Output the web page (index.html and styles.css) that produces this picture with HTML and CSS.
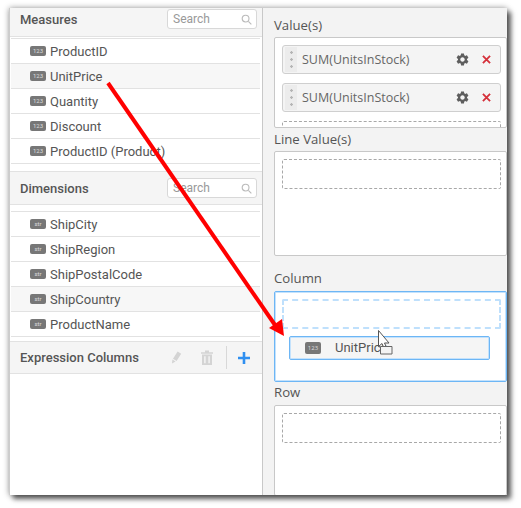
FILE: index.html
```html
<!DOCTYPE html>
<html>

<head>
  <title>Chart Data Panel</title>
  <link rel="stylesheet" href="styles.css">
</head>

<body>
  <div class="window">
    <div class="left">
      <div class="head head-first">
        <span class="head-title">Measures</span>
        <div class="search"><span>Search</span>
          <svg class="search-icon" width="11" height="11" viewBox="0 0 12 12"><circle cx="5" cy="5" r="3.7"/><path d="M8 8l3.3 3.3"/></svg>
        </div>
      </div>
      <ul class="list">
        <li><span class="badge">123</span>ProductID</li>
        <li class="shaded"><span class="badge">123</span>UnitPrice</li>
        <li><span class="badge">123</span>Quantity</li>
        <li><span class="badge">123</span>Discount</li>
        <li><span class="badge">123</span>ProductID (Product)</li>
      </ul>
      <div class="head">
        <span class="head-title">Dimensions</span>
        <div class="search"><span>Search</span>
          <svg class="search-icon" width="11" height="11" viewBox="0 0 12 12"><circle cx="5" cy="5" r="3.7"/><path d="M8 8l3.3 3.3"/></svg>
        </div>
      </div>
      <ul class="list list-dims">
        <li><span class="badge">str</span>ShipCity</li>
        <li><span class="badge">str</span>ShipRegion</li>
        <li><span class="badge">str</span>ShipPostalCode</li>
        <li class="shaded"><span class="badge">str</span>ShipCountry</li>
        <li><span class="badge">str</span>ProductName</li>
      </ul>
      <div class="head head-expr">
        <span class="head-title">Expression Columns</span>
        <div class="tools">
          <svg width="14" height="15" viewBox="0 0 14 15"><path class="tool-fill" d="M8.6 1.5l3.6 2.2-4.6 7.2-3.6-2.2zM3.4 9.6l3.2 2-3.6 1.8z"/></svg>
          <svg class="trash" width="14" height="15" viewBox="0 0 14 15"><path class="tool-fill" d="M1 2.2h12v1.5H1zM5 .6h4v1.6H5zM2 4.6h10V15H2zM4.2 6.2v7h1.4v-7zM8.4 6.2v7h1.4v-7z" fill-rule="evenodd"/></svg>
          <span class="sep"></span>
          <svg width="12" height="12" viewBox="0 0 12 12"><path class="plus" d="M6 0v12M0 6h12"/></svg>
        </div>
      </div>
    </div>

    <div class="right">
      <div class="label">Value(s)</div>
      <div class="box box-values">
        <div class="item">
          <span class="grip"></span>
          <span class="item-name">SUM(UnitsInStock)</span>
          <svg class="gear" width="15" height="15" viewBox="0 0 24 24"><path d="M19.14 12.94c.04-.3.06-.61.06-.94 0-.32-.02-.64-.07-.94l2.03-1.58c.18-.14.23-.41.12-.61l-1.92-3.32c-.12-.22-.37-.29-.59-.22l-2.39.96c-.5-.38-1.03-.7-1.62-.94l-.36-2.54c-.04-.24-.24-.41-.48-.41h-3.84c-.24 0-.43.17-.47.41l-.36 2.54c-.59.24-1.13.57-1.62.94l-2.39-.96c-.22-.08-.47 0-.59.22L2.74 8.87c-.12.21-.08.47.12.61l2.03 1.58c-.05.3-.09.63-.09.94s.02.64.07.94l-2.03 1.58c-.18.14-.23.41-.12.61l1.92 3.32c.12.22.37.29.59.22l2.39-.96c.5.38 1.03.7 1.62.94l.36 2.54c.05.24.24.41.48.41h3.84c.24 0 .44-.17.47-.41l.36-2.54c.59-.24 1.13-.56 1.62-.94l2.39.96c.22.08.47 0 .59-.22l1.92-3.32c.12-.22.07-.47-.12-.61l-2.01-1.58zM12 15.6c-1.98 0-3.6-1.62-3.6-3.6s1.62-3.6 3.6-3.6 3.6 1.62 3.6 3.6-1.62 3.6-3.6 3.6z"/></svg>
          <svg class="remove" width="9" height="9" viewBox="0 0 10 10"><path d="M1 1l8 8M9 1l-8 8"/></svg>
        </div>
        <div class="item">
          <span class="grip"></span>
          <span class="item-name">SUM(UnitsInStock)</span>
          <svg class="gear" width="15" height="15" viewBox="0 0 24 24"><path d="M19.14 12.94c.04-.3.06-.61.06-.94 0-.32-.02-.64-.07-.94l2.03-1.58c.18-.14.23-.41.12-.61l-1.92-3.32c-.12-.22-.37-.29-.59-.22l-2.39.96c-.5-.38-1.03-.7-1.62-.94l-.36-2.54c-.04-.24-.24-.41-.48-.41h-3.84c-.24 0-.43.17-.47.41l-.36 2.54c-.59.24-1.13.57-1.62.94l-2.39-.96c-.22-.08-.47 0-.59.22L2.74 8.87c-.12.21-.08.47.12.61l2.03 1.58c-.05.3-.09.63-.09.94s.02.64.07.94l-2.03 1.58c-.18.14-.23.41-.12.61l1.92 3.32c.12.22.37.29.59.22l2.39-.96c.5.38 1.03.7 1.62.94l.36 2.54c.05.24.24.41.48.41h3.84c.24 0 .44-.17.47-.41l.36-2.54c.59-.24 1.13-.56 1.62-.94l2.39.96c.22.08.47 0 .59-.22l1.92-3.32c.12-.22.07-.47-.12-.61l-2.01-1.58zM12 15.6c-1.98 0-3.6-1.62-3.6-3.6s1.62-3.6 3.6-3.6 3.6 1.62 3.6 3.6-1.62 3.6-3.6 3.6z"/></svg>
          <svg class="remove" width="9" height="9" viewBox="0 0 10 10"><path d="M1 1l8 8M9 1l-8 8"/></svg>
        </div>
        <div class="drop"></div>
      </div>

      <div class="label label-line">Line Value(s)</div>
      <div class="box box-line">
        <div class="drop"></div>
      </div>

      <div class="label label-column">Column</div>
      <div class="box box-column">
        <div class="drop"></div>
        <div class="drag-item"><span class="badge">123</span><span class="drag-name">UnitPrice</span></div>
      </div>

      <div class="label label-row">Row</div>
      <div class="box box-row">
        <div class="drop"></div>
      </div>
    </div>
  </div>

  <!-- annotation and mouse pointer on top of the screenshot -->
  <svg class="overlay" width="521" height="508" viewBox="0 0 521 508">
    <path d="M108 83L275 325" stroke="#f00" stroke-width="4" fill="none"/>
    <path d="M284 336L269 328L282 319z" fill="#f00"/>
    <path d="M378.500 330.500v16l3.500-3 2.500 6 2.500-1-2.500-5.500h4.500z" fill="#fff" stroke="#555" stroke-width="1"/>
    <path d="M380.500 346.500h11.500v7.500h-11.500z" fill="#f4f4f4" stroke="#666" stroke-width="1"/>
  </svg>
</body>

</html>
```

FILE: styles.css
```css
body {
  height: 508px;
  box-sizing: border-box;
  margin: 0;
  padding: 8px 0 0 9px;
  background: #fff;
  font-family: "Roboto", sans-serif;
  color: #555;
  overflow: hidden;
}

.window {
  display: flex;
  width: 498px;
  height: 487px;
  background: #fff;
  box-shadow: 4px 4px 5px rgba(0, 0, 0, .6), 0 0 6px rgba(0, 0, 0, .4);
}

.overlay {
  position: absolute;
  top: 0;
  left: 0;
}

/* left panel */
.left {
  width: 254px;
  box-sizing: border-box;
  border-left: 1px solid #ccc;
  border-right: 1px solid #c8c8c8;
}

.head {
  display: flex;
  align-items: center;
  justify-content: space-between;
  height: 34px;
  box-sizing: border-box;
  padding: 0 5px 0 10px;
  background: #f5f5f5;
  border-top: 1px solid #e2e2e2;
  border-bottom: 1px solid #e2e2e2;
}

.head-first {
  height: 29px;
  padding-bottom: 6px;
  border-top: none;
}

.head-expr {
  height: 33px;
}

.head-title {
  font-size: 13px;
  font-weight: 500;
  color: #555;
}

.search {
  display: flex;
  align-items: center;
  justify-content: space-between;
  width: 90px;
  height: 20px;
  box-sizing: border-box;
  padding: 0 4px 0 5px;
  background: #fff;
  border: 1px solid #d8d8d8;
  border-radius: 3px;
  font-size: 12px;
  color: #999;
}

.search-icon {
  fill: none;
  stroke: #bbb;
  stroke-width: 1.2;
}

.list {
  list-style: none;
  margin: 1px 2px 7px 1px;
  padding: 0;
  border-top: 1px solid #e2e2e2;
}

.list-dims {
  margin-top: 6px;
  margin-bottom: 4px;
}

.list li {
  display: flex;
  align-items: center;
  height: 24px;
  padding-left: 19px;
  font-size: 13px;
  color: #555;
  background: #fff;
  border-bottom: 1px solid #e2e2e2;
}

.list li.shaded {
  background: #f7f7f7;
}

.badge {
  width: 16px;
  height: 10px;
  margin-right: 4px;
  border-radius: 2px;
  background: #777;
  color: #ddd;
  font-size: 6px;
  line-height: 10px;
  text-align: center;
}

.tools {
  display: flex;
  align-items: center;
  padding-right: 7px;
}

.trash {
  margin-left: 17px;
}

.tool-fill {
  fill: #d4d4d4;
}

.sep {
  width: 1px;
  height: 23px;
  margin: 0 11px 0 12px;
  background: #d8d8d8;
}

.plus {
  fill: none;
  stroke: #2f8ff0;
  stroke-width: 2.6;
}

/* right panel */
.right {
  width: 244px;
  box-sizing: border-box;
  padding-left: 11px;
  background: #f3f3f3;
  font-family: "Open Sans", sans-serif;
  overflow: hidden;
}

.label {
  height: 18px;
  margin-top: 8px;
  font-size: 13.200px;
  line-height: 18px;
  color: #555;
}

.label-line {
  margin-top: 2px;
}

.label-column {
  margin-top: 13px;
}

.label-row {
  margin-top: 1px;
}

.box {
  position: relative;
  box-sizing: border-box;
  margin-top: 3px;
  padding: 7px 5px 0 7px;
  background: #fff;
  border: 1px solid #c8c8c8;
  border-radius: 2px;
  overflow: hidden;
}

.box-values {
  height: 91px;
}

.box-line {
  height: 105px;
}

.box-column {
  height: 91px;
  margin-top: 4px;
  border-color: #6db6f5;
  box-shadow: inset 0 0 0 1px #c4e2fc;
}

.box-row {
  height: 91px;
  margin-top: 4px;
}

.drop {
  height: 30px;
  box-sizing: border-box;
  border: 1px dashed #a8a8a8;
  border-radius: 2px;
}

.box-column .drop {
  border: 2px dashed #bfe0fc;
}

.item {
  display: flex;
  align-items: center;
  height: 29px;
  box-sizing: border-box;
  margin-bottom: 9px;
  background: #f4f4f4;
  border: 1px solid #cfcfcf;
  border-radius: 3px;
}

.grip {
  width: 12px;
  height: 25px;
  margin-left: 2px;
  background-color: #ececec;
  background-image: radial-gradient(circle, #b5b5b5 1px, transparent 1.5px);
  background-size: 3px 7px;
  background-repeat: repeat-y;
  background-position: center;
}

.item-name {
  flex: 1;
  margin-left: 5px;
  font-size: 12.500px;
  color: #666;
}

.gear {
  margin-right: 12px;
  fill: #5e5e5e;
}

.remove {
  margin-right: 9px;
  fill: none;
  stroke: #d5303a;
  stroke-width: 2;
}

.drag-item {
  position: absolute;
  top: 44px;
  left: 14px;
  display: flex;
  align-items: center;
  width: 201px;
  height: 24px;
  box-sizing: border-box;
  padding: 0 0 1px 15px;
  background: #f5f5f5;
  border: 1px solid #6db6f5;
  border-radius: 2px;
  box-shadow: inset 0 0 0 1px #c4e2fc;
}

.drag-item .badge {
  height: 12px;
  line-height: 12px;
  border-radius: 2px;
}

.drag-name {
  margin-left: 10px;
  font-family: "Roboto", sans-serif;
  font-size: 13px;
  color: #555;
}
```
